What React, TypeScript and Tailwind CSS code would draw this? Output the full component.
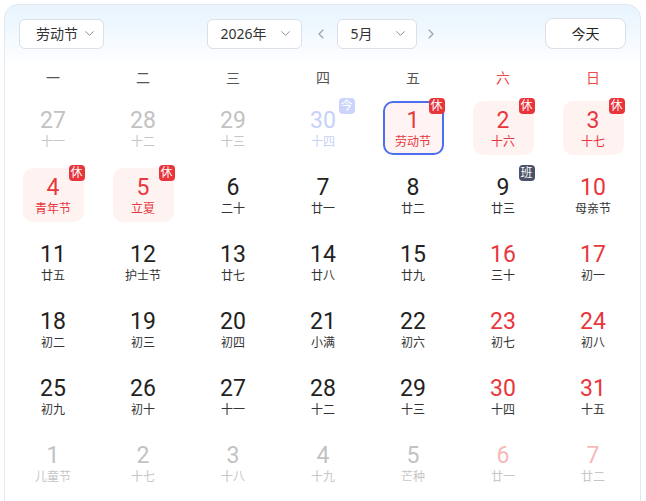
import { ChevronDown, ChevronLeft, ChevronRight } from "lucide-react";

type Tone = "normal" | "weekend" | "muted" | "mutedWeekend" | "today";

interface Day {
  n: number;
  lunar: string;
  tone: Tone;
  badge?: "休" | "班" | "今";
  rest?: boolean; // pink holiday box
  selected?: boolean;
}

const d = (n: number, lunar: string, tone: Tone = "normal", extra: Partial<Day> = {}): Day => ({
  n,
  lunar,
  tone,
  ...extra,
});

const weeks: Day[][] = [
  [
    d(27, "十一", "muted"),
    d(28, "十二", "muted"),
    d(29, "十三", "muted"),
    d(30, "十四", "today", { badge: "今" }),
    d(1, "劳动节", "weekend", { badge: "休", rest: true, selected: true }),
    d(2, "十六", "weekend", { badge: "休", rest: true }),
    d(3, "十七", "weekend", { badge: "休", rest: true }),
  ],
  [
    d(4, "青年节", "weekend", { badge: "休", rest: true }),
    d(5, "立夏", "weekend", { badge: "休", rest: true }),
    d(6, "二十"),
    d(7, "廿一"),
    d(8, "廿二"),
    d(9, "廿三", "normal", { badge: "班" }),
    d(10, "母亲节", "weekend"),
  ],
  [
    d(11, "廿五"),
    d(12, "护士节"),
    d(13, "廿七"),
    d(14, "廿八"),
    d(15, "廿九"),
    d(16, "三十", "weekend"),
    d(17, "初一", "weekend"),
  ],
  [
    d(18, "初二"),
    d(19, "初三"),
    d(20, "初四"),
    d(21, "小满"),
    d(22, "初六"),
    d(23, "初七", "weekend"),
    d(24, "初八", "weekend"),
  ],
  [
    d(25, "初九"),
    d(26, "初十"),
    d(27, "十一"),
    d(28, "十二"),
    d(29, "十三"),
    d(30, "十四", "weekend"),
    d(31, "十五", "weekend"),
  ],
  [
    d(1, "儿童节", "muted"),
    d(2, "十七", "muted"),
    d(3, "十八", "muted"),
    d(4, "十九", "muted"),
    d(5, "芒种", "muted"),
    d(6, "廿一", "mutedWeekend"),
    d(7, "廿二", "mutedWeekend"),
  ],
];

const weekdays = ["一", "二", "三", "四", "五", "六", "日"];

const numberColor: Record<Tone, string> = {
  normal: "text-[#222222]",
  weekend: "text-[#e8373d]",
  muted: "text-[#c2c2c2]",
  mutedWeekend: "text-[#f7b8b8]",
  today: "text-[#c8d1f8]",
};

const lunarColor: Record<Tone, string> = {
  normal: "text-[#333333]",
  weekend: "text-[#333333]",
  muted: "text-[#c6c6c6]",
  mutedWeekend: "text-[#c6c6c6]",
  today: "text-[#cad2f6]",
};

const badgeColor = {
  休: "bg-[#e8343b]",
  班: "bg-[#4b5168]",
  今: "bg-[#cbd4fb]",
};

function DayCell({ day }: { day: Day }) {
  const box = day.selected
    ? "border-2 border-[#4e6ef0] bg-[#fff4f3]"
    : day.rest
      ? "border-2 border-transparent bg-[#fff3f2]"
      : "border-2 border-transparent";

  return (
    <div className="flex h-[67px] items-center justify-center">
      <div
        className={`relative flex h-[54px] w-[61px] flex-col items-center justify-center rounded-[10px] pt-[2px] ${box}`}
      >
        <span
          className={`text-[23px] font-normal leading-[26px] ${numberColor[day.tone]}`}
          style={{ fontFamily: "Roboto, 'Noto Sans', sans-serif" }}
        >
          {day.n}
        </span>
        <span
          className={`text-[12px] leading-[15px] ${day.rest ? "text-[#e8373d]" : lunarColor[day.tone]}`}
        >
          {day.lunar}
        </span>
        {day.badge && (
          <span
            className={`absolute -right-[3px] -top-[5px] flex h-[16px] w-[16px] items-center justify-center rounded-[4px] text-[12px] leading-none text-white ${badgeColor[day.badge]}`}
          >
            {day.badge}
          </span>
        )}
      </div>
    </div>
  );
}

export default function App() {
  return (
    <div
      className="h-[501px] w-[646px] overflow-hidden bg-white"
      style={{ fontFamily: "'Noto Sans', 'Noto Sans CJK SC', sans-serif" }}
    >
      <div className="ml-[4px] mt-[4px] h-[520px] w-[637px] rounded-[14px] border border-[#e3e8ee] bg-gradient-to-b from-[#e7f4fe] via-white to-white via-[12%]">
        {/* Toolbar */}
        <div className="grid grid-cols-[1fr_auto_1fr] items-center px-[14px] pt-[13px]">
          <div className="flex">
            <button className="flex h-[30px] items-center gap-[4px] rounded-[6px] border border-[#dcdfe6] bg-white pl-[16px] pr-[6px] text-[14px] text-[#333]">
              劳动节
              <ChevronDown size={15} strokeWidth={1.6} className="text-[#8a8f99]" />
            </button>
          </div>

          <div className="flex items-center">
            <button className="flex h-[30px] w-[95px] items-center justify-between rounded-[6px] border border-[#dcdfe6] bg-white pl-[13px] pr-[8px] text-[14px] text-[#333]">
              2026年
              <ChevronDown size={15} strokeWidth={1.6} className="text-[#8a8f99]" />
            </button>
            <ChevronLeft size={16} strokeWidth={1.6} className="ml-[11px] mr-[8px] text-[#9aa0aa]" />
            <button className="flex h-[30px] w-[80px] items-center justify-between rounded-[6px] border border-[#dcdfe6] bg-white pl-[13px] pr-[8px] text-[14px] text-[#333]">
              5月
              <ChevronDown size={15} strokeWidth={1.6} className="text-[#8a8f99]" />
            </button>
            <ChevronRight size={16} strokeWidth={1.6} className="ml-[6px] text-[#9aa0aa]" />
          </div>

          <div className="flex justify-end">
            <button className="flex h-[31px] w-[81px] items-center justify-center rounded-[8px] border border-[#dcdfe6] bg-white text-[14px] text-[#222]">
              今天
            </button>
          </div>
        </div>

        {/* Calendar grid */}
        <div className="pl-[3px] pr-[2px] pt-[11px]">
          <div className="grid grid-cols-7">
            {weekdays.map((w, i) => (
              <div
                key={w}
                className={`flex h-[34px] items-center justify-center text-[14px] ${i >= 5 ? "text-[#ee4a4a]" : "text-[#555]"}`}
              >
                {w}
              </div>
            ))}
          </div>
          {weeks.map((week, wi) => (
            <div key={wi} className="grid grid-cols-7">
              {week.map((day, di) => (
                <DayCell key={di} day={day} />
              ))}
            </div>
          ))}
        </div>
      </div>
    </div>
  );
}
